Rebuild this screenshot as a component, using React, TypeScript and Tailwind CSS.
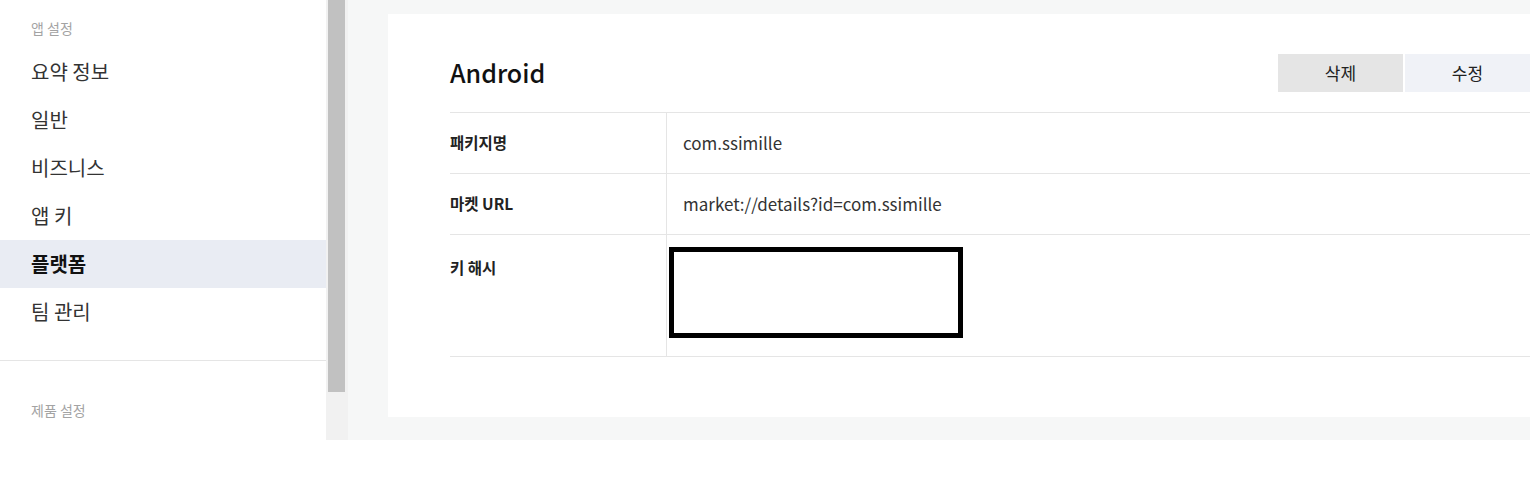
const font = { fontFamily: '"Noto Sans CJK KR", "Noto Sans", sans-serif' };

export default function App() {
  const menu = [
    { label: "요약 정보" },
    { label: "일반" },
    { label: "비즈니스" },
    { label: "앱 키" },
    { label: "플랫폼", active: true },
    { label: "팀 관리" },
  ];

  const rows = [
    { label: "패키지명", value: "com.ssimille" },
    { label: "마켓 URL", value: "market://details?id=com.ssimille" },
  ];

  return (
    <div className="w-[1530px] h-[497px] bg-white overflow-hidden flex items-start" style={font}>
      {/* Sidebar */}
      <aside className="w-[326px] h-[440px] shrink-0 bg-white flex flex-col">
        <div className="h-[48px] pl-[31px] pt-[18px] text-[14px] leading-5 text-[#a3a3a3]">앱 설정</div>
        <ul>
          {menu.map((item) => (
            <li
              key={item.label}
              className={`h-[48px] pl-[31px] flex items-center text-[20px] ${
                item.active ? "bg-[#e9ecf3] font-bold text-[#111]" : "text-[#333]"
              }`}
            >
              {item.label}
            </li>
          ))}
        </ul>
        <div className="mt-[24px] border-t border-[#e5e5e5]" />
        <div className="pl-[31px] pt-[39px] text-[14px] leading-5 text-[#a3a3a3]">제품 설정</div>
      </aside>

      {/* Scrollbar */}
      <div className="w-[22px] h-[440px] shrink-0 bg-[#f1f1f1]">
        <div className="ml-[2px] w-[17px] h-[392px] bg-[#c1c1c1]" />
      </div>

      {/* Main */}
      <main className="flex-1 h-[440px] bg-[#f6f7f7] pl-[40px] pt-[14px] overflow-hidden">
        <section className="w-[1204px] h-[403px] bg-white px-[62px] pt-[40px]">
          <div className="flex items-center justify-between h-[38px]">
            <h1 className="text-[25px] leading-[36px] -mt-[3px] font-medium text-[#111]">Android</h1>
            <div className="flex gap-[2px]">
              <button className="w-[125px] h-[38px] bg-[#e5e5e5] text-[17px] text-[#222]">삭제</button>
              <button className="w-[125px] h-[38px] bg-[#f0f2f7] text-[17px] text-[#222]">수정</button>
            </div>
          </div>

          <div className="mt-[20px] border-t border-[#e5e5e5]">
            {rows.map((row) => (
              <div key={row.label} className="flex h-[61px] border-b border-[#e5e5e5]">
                <div className="w-[216px] flex items-center text-[15.5px] font-bold text-[#222]">{row.label}</div>
                <div className="flex-1 border-l border-[#e5e5e5] pl-[16px] flex items-center text-[17px] text-[#333]">
                  {row.value}
                </div>
              </div>
            ))}
            <div className="flex h-[122px] border-b border-[#e5e5e5]">
              <div className="w-[216px] pt-[20px] text-[15.5px] font-bold text-[#222] leading-6">키 해시</div>
              <div className="flex-1 border-l border-[#e5e5e5] pl-[2px] pt-[12px]">
                <div className="w-[294px] h-[91px] border-[5px] border-black bg-white" />
              </div>
            </div>
          </div>
        </section>
      </main>
    </div>
  );
}
